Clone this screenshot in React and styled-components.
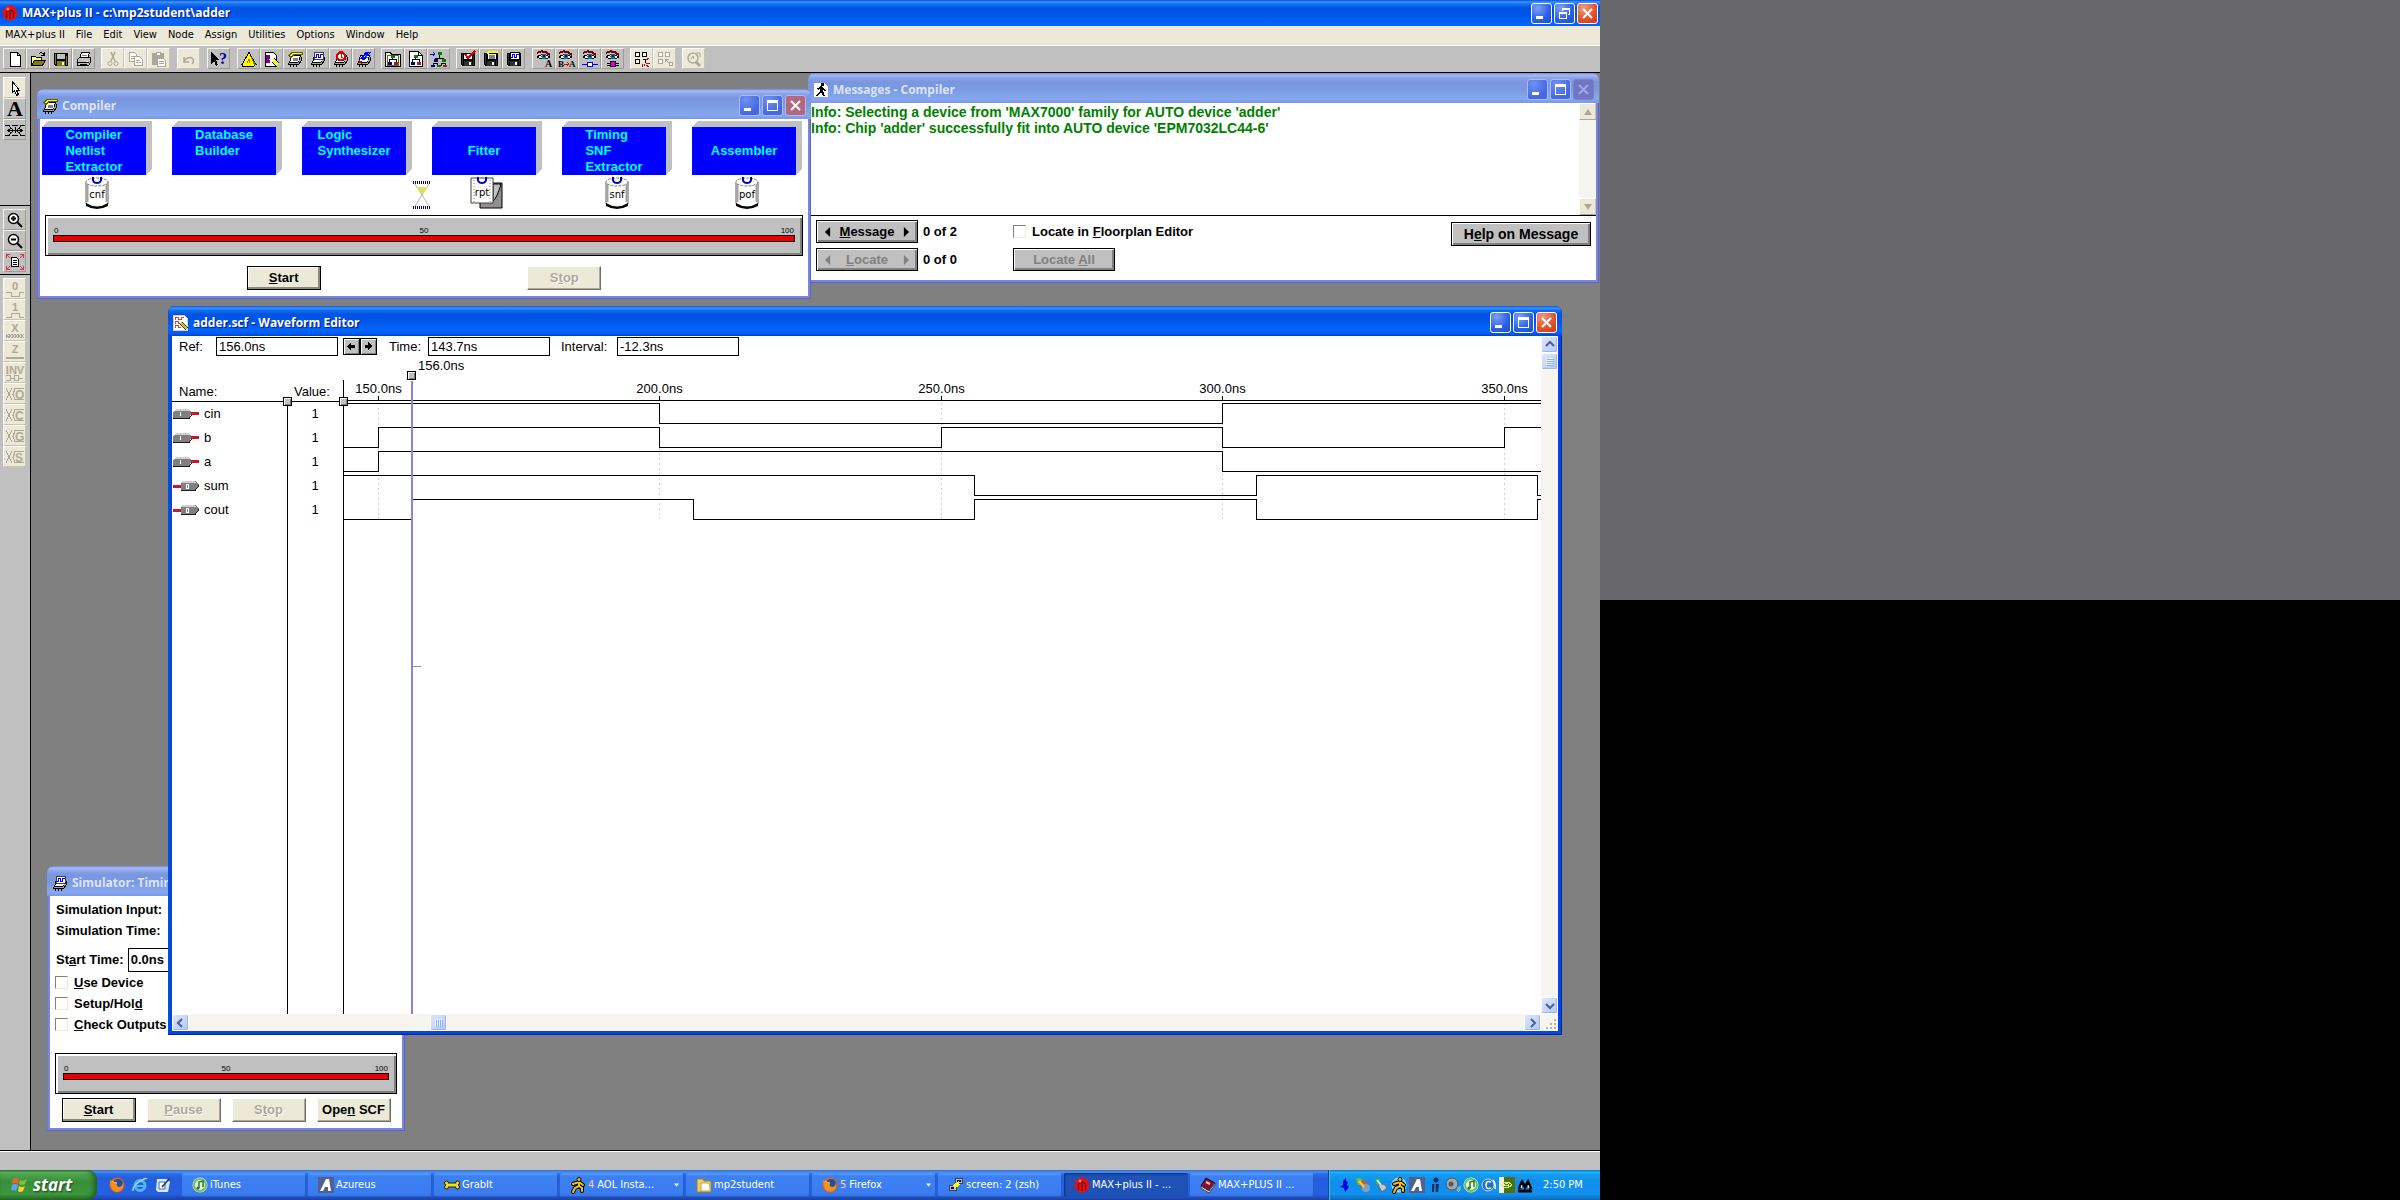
import React, { useState } from 'react'
import styled, { createGlobalStyle, css } from 'styled-components'

const UI = "Tahoma, 'DejaVu Sans Condensed', 'Liberation Sans', sans-serif"
const SYSTEM = "'Liberation Sans', Arial, sans-serif"
const CAPTION = "'Trebuchet MS', 'Open Sans', 'Noto Sans', sans-serif"

/* ---------- small helpers ---------- */

// "&Start" -> underlined S
const Accel = ({ text }) => {
  const i = text.indexOf('&')
  if (i < 0) return <span>{text}</span>
  return (
    <span>
      {text.slice(0, i)}
      <u>{text[i + 1]}</u>
      {text.slice(i + 2)}
    </span>
  )
}

const Pic = ({ children, w = 16, h = 16, smooth }) => (
  <svg width={w} height={h} viewBox={`0 0 ${w} ${h}`} fill="none" stroke="none" aria-hidden="true" shapeRendering={smooth ? 'auto' : 'crispEdges'}>
    {children}
  </svg>
)

/* ---------- icons ---------- */

const GRAY = '#aca899'

const Floppy = ({ fill = '#303030', label = '#c0c0c0' }) => (
  <g>
    <path d="M1 2h14v13H2l-1-1z" fill="#000" />
    <path d="M2 3h1v10H2zM13 5h1v9h-1z" fill={fill} />
    <path d="M4 3h8v5H4z" fill={label} />
    <path d="M4 10h8v5H4z" fill={fill} />
    <path d="M9 11h2v3H9z" fill="#fff" />
  </g>
)

const ChipBody = () => (
  <g>
    <path d="M4.500 4.500h9l-2 7h-9z" fill="#fff" stroke="#000" />
    <path d="M2 12h9l3-6v4l-2 4H1z" fill="#a0a0a0" />
    <path d="M1.500 11.500v2h10l3-4v-4" stroke="#000" />
    <path d="M3.500 14v2M6.500 14v2M9.500 14v2" stroke="#000" />
  </g>
)

const Eye = () => (
  <g>
    <path d="M1 3q6-4 13 2" stroke="#800000" strokeWidth="2" />
    <path d="M1 7q6-5 13 0q-7 4-13 0" fill="#fff" stroke="#000" />
    <circle cx="8" cy="6.500" r="2.500" fill="#008080" />
    <path d="M7 5h2v2H7z" fill="#000080" />
  </g>
)

const Tree = ({ y = 0 }) => (
  <g transform={`translate(0 ${y})`}>
    <path d="M7.500 6v2M4.500 10V7.500h7V10" stroke="#000" />
    <path d="M6 3h4v3H6z" fill="#008000" />
    <path d="M3 10h4v3H3z" fill="#000080" />
    <path d="M9 10h4v3H9z" fill="#a02020" />
  </g>
)

const GlyphText = ({ x, y, size, fill = '#000', children, family = 'Liberation Serif' }) => (
  <text x={x} y={y} fontSize={size} fontWeight="700" fontFamily={`'${family}', serif`} fill={fill}>{children}</text>
)

const icons = {
  new: <Pic><path d="M3.500 1.500h7l3 3v11h-10z" fill="#fff" stroke="#000" /><path d="M10.500 1.500v3h3" stroke="#000" /></Pic>,
  open: (
    <Pic>
      <path d="M1.500 14.500v-9h4l1 1h5v3" fill="#ffff80" stroke="#000" />
      <path d="M1.500 14.500l3-5h11l-3 5z" fill="#808000" stroke="#000" />
      <path d="M9 3q3-3 5 1M14 1v3h-3" stroke="#000" />
    </Pic>
  ),
  save: <Pic><Floppy fill="#808000" /></Pic>,
  print: (
    <Pic>
      <path d="M5.500 1.500h8l-2 6h-8z" fill="#fff" stroke="#000" />
      <path d="M6 4h5M6 6h4" stroke="#808080" />
      <path d="M1.500 8.500l2-2h11v5l-2 3h-11z" fill="#c0c0c0" stroke="#000" />
      <path d="M2 11h11M4 13h7" stroke="#000" />
      <path d="M10 10h2v1h-2z" fill="#ffff00" />
    </Pic>
  ),
  cut: <Pic smooth><path d="M6 1l4 9M10 1L6 10" stroke={GRAY} strokeWidth="1.500" /><circle cx="5" cy="12.500" r="2" stroke={GRAY} /><circle cx="11" cy="12.500" r="2" stroke={GRAY} /></Pic>,
  copy: <Pic><path d="M1.500 1.500h5l2 2v7h-7z" fill="#fff" stroke={GRAY} /><path d="M6.500 5.500h5l3 3v6h-8z" fill="#fff" stroke={GRAY} /><path d="M8 9.500h4M8 11.500h5M3 5.500h3M3 7.500h3" stroke={GRAY} /></Pic>,
  paste: <Pic><path d="M1.500 2.500h11v11h-11z" fill={GRAY} stroke={GRAY} /><path d="M5 1h4v3H5z" fill="#fff" stroke={GRAY} /><path d="M6.500 7.500h6l2 2v6h-8z" fill="#fff" stroke={GRAY} /><path d="M8 10.500h5M8 12.500h5" stroke={GRAY} /></Pic>,
  undo: <Pic smooth><path d="M3 6v5h5M3 10q4-5 8-3q3 3 0 6" stroke={GRAY} strokeWidth="1.500" /></Pic>,
  help: (
    <Pic w={18}>
      <path d="M1 1v12l3-3 2 5 2-1-2-5h4z" fill="#000" />
      <GlyphText x={9} y={13} size={16} fill="#0000a0">?</GlyphText>
    </Pic>
  ),
  tri: <Pic><path d="M8 1.500l7 12-3 2H2l-1-2z" fill="#ffff00" stroke="#000" /><path d="M8 2l5 12h2z" fill="#808000" /><path d="M6 12l2-4 1 4" stroke="#c06000" /></Pic>,
  design: (
    <Pic>
      <path d="M1.500 1.500h8l3 3v11h-11z" fill="#fff" stroke="#000" />
      <path d="M2 4h4v8H2z" fill="#800080" />
      <path d="M9 9l5 5" stroke="#000" strokeWidth="5" />
      <path d="M9 9l5 5" stroke="#ffff00" strokeWidth="3" />
      <path d="M6 8l3 3" stroke="#fff" strokeWidth="2" />
    </Pic>
  ),
  compiler: (
    <Pic>
      <ChipBody />
      <path d="M2 4.500l3-3h10v2H7l-3 3z" fill="#ffff00" stroke="#606000" />
      <path d="M6 7h5v3H6z" fill="#808080" />
    </Pic>
  ),
  sim: <Pic><ChipBody /><path d="M4.500 1.500h9v7h-9z" fill="#fff" stroke="#404040" /><path d="M5 6.500h1.500v-3h2v3h2v-3H13" stroke="#0000ff" /></Pic>,
  timing: <Pic><ChipBody /><circle cx="8" cy="5.500" r="4" fill="#fff" stroke="#e00000" strokeWidth="2" /><path d="M8 3v3h2M6 0h4" stroke="#e00000" /></Pic>,
  prog: <Pic><ChipBody /><path d="M14 1L7 9M11 1L5 8" stroke="#0000ff" strokeWidth="2" /><path d="M9 4l3 3M12 2l3 3" stroke="#00c0ff" /><path d="M3 10l3 2" stroke="#c00000" strokeWidth="2" /></Pic>,
  hier1: <Pic><path d="M.500 15.500v-14h5l1 2h9v12z" fill="#ffff99" stroke="#000" /><path d="M2.500 4.500h11v10h-11z" fill="#fff" stroke="#606060" /><Tree y={1} /></Pic>,
  hier2: <Pic><path d="M1.500.500h9l4 4v11h-13z" fill="#fff" stroke="#000" /><path d="M10.500.500v4h4" stroke="#000" /><Tree y={1} /></Pic>,
  hier3: (
    <Pic w={18}>
      <path d="M0 3h5M3 1l2 2-2 2" stroke="#0000ff" />
      <path d="M9.500 4v3M5.500 10V7.500h8V10M3.500 15v-2.500h4V15M11.500 15v-2.500h4V15" stroke="#000" />
      <path d="M8 1h4v3H8z" fill="#008000" />
      <path d="M4 8h4v3H4zM1 14h4v2H1z" fill="#000080" />
      <path d="M12 8h4v3h-4zM7 14h4v2H7z" fill="#008000" />
      <path d="M13 14h4v2h-4z" fill="#a02020" />
    </Pic>
  ),
  saveCheck: <Pic><Floppy label="#fff" /><path d="M5 3l3 4 7-7" stroke="#e00000" strokeWidth="2" /></Pic>,
  saveComp: <Pic><Floppy /><path d="M4.500 2.500h9v6h-9z" fill="#fff" stroke="#000" /><path d="M4 2l3-1h8" stroke="#ffff00" strokeWidth="2" /><path d="M6 4h6v4H6z" fill="#808080" /></Pic>,
  saveSim: <Pic><Floppy /><path d="M4.500 1.500h9v7h-9z" fill="#fff" stroke="#000" /><path d="M5 6.500h1.500v-3h2v3h2v-3H13" stroke="#0000ff" /></Pic>,
  eyeA: <Pic h={18}><Eye /><GlyphText x={9} y={17} size={10}>A</GlyphText></Pic>,
  eyeBA: <Pic w={18} h={18}><Eye /><GlyphText x={0} y={17} size={9}>B</GlyphText><path d="M6 14h5M9 12l2 2-2 2" stroke="#e00000" /><GlyphText x={11} y={17} size={9}>A</GlyphText></Pic>,
  eyeNode: <Pic h={18}><Eye /><path d="M0 14.500h16" stroke="#0000ff" /><path d="M5.500 12.500h5v4h-5z" fill="#fff" stroke="#0000ff" /></Pic>,
  eyeChip: <Pic h={18}><Eye /><path d="M2 13.500h12M2 15.500h12" stroke="#000" /><path d="M5.500 11.500h5v5h-5z" fill="#e000e0" stroke="#000" /></Pic>,
  grid1: (
    <Pic>
      <path d="M1.500 1.500h4v4h-4zM8.500 1.500h4v4h-4zM1.500 8.500h4v4h-4zM8.500 8.500h3v3" fill="#fff" stroke="#000" />
      <path d="M12 9l3-2M12 12h4M12 14l3 2M8 13v3M10 13v2" stroke="#e00000" />
    </Pic>
  ),
  grid2: <Pic><path d="M1.500 1.500h4v4h-4zM8.500 1.500h4v4h-4zM1.500 8.500h4v4h-4zM12.500 11.500h3v3h-3z" fill="#fff" stroke={GRAY} /><path d="M8 8l4 4M8.500 11V8.500h3" stroke={GRAY} /></Pic>,
  find: <Pic smooth><circle cx="7" cy="7" r="5" stroke={GRAY} strokeWidth="1.500" /><path d="M10 11l4 4" stroke={GRAY} strokeWidth="3" /><path d="M10 2h4v4M5 8l2-3 1 3" stroke={GRAY} /></Pic>,
  pointer: <Pic><path d="M5.500 1.500v11l2-2 2 5 2-1-2-4h3z" fill="#fff" stroke="#000" /></Pic>,
  textTool: <Pic w={18} h={18}><GlyphText x={1} y={16} size={22}>A</GlyphText></Pic>,
  nodeTool: (
    <Pic w={20}>
      <path d="M0 3.500h4l4 5-4 5H0M20 3.500h-4l-4 5 4 5h4M7 3.500h6M7 13.500h6" stroke="#000" />
      <path d="M3 8.500h14M6 6L3 8.500l3 2.500M14 6l3 2.500-3 2.500M10 5v6" stroke="#000" />
    </Pic>
  ),
  zoomIn: <Pic smooth><circle cx="6.500" cy="6.500" r="5" fill="#fff" stroke="#000" strokeWidth="1.500" /><path d="M4 6.500h5M6.500 4v5" stroke="#000" strokeWidth="2" /><path d="M10 10l5 5" stroke="#000" strokeWidth="2" /></Pic>,
  zoomOut: <Pic smooth><circle cx="6.500" cy="6.500" r="5" fill="#fff" stroke="#000" strokeWidth="1.500" /><path d="M4 6.500h5" stroke="#000" strokeWidth="2" /><path d="M10 10l5 5" stroke="#000" strokeWidth="2" /></Pic>,
  fit: (
    <Pic w={18}>
      <path d="M5.500 3.500h5l2 2v7h-7z" fill="#fff" stroke="#000" />
      <path d="M7 6.500h4M7 8.500h4M7 10.500h4" stroke="#000" />
      <path d="M.500 4V.500H4M1 1l3 3M14 .500h3.500V4M17 1l-3 3M.500 12v3.500H4M1 15l3-3M14 15.500h3.500V12M17 15l-3-3" stroke="#e03050" />
    </Pic>
  ),
}

// labels and strokes on the greyed waveform buttons
const waveTools = [
  { name: 'Low', text: '0', path: 'M1 12.500h5v4h8v-4h5' },
  { name: 'High', text: '1', path: 'M1 16.500h5v-4h8v4h5' },
  { name: 'Undefined', text: 'X', path: 'M1 12l3 4 3-4 3 4 3-4 3 4 3-4M1 16l3-4 3 4 3-4 3 4 3-4 3 4' },
  { name: 'High impedance', text: 'Z', path: 'M1 14.500h18M1 15.500h18' },
  { name: 'Invert', text: 'INV', path: 'M1 11.500h4v3h4v-3h4v3h5M1 16.500h4v-2h4v2h4v-2h5' },
  { name: 'Clock', text: 'O', side: true },
  { name: 'Count', text: 'C', side: true },
  { name: 'Group', text: 'G', side: true },
  { name: 'State', text: 'S', side: true },
]

const WaveGlyph = ({ text, path, side }) => (
  <Pic w={20} h={18}>
    {side ? (
      <g stroke={GRAY}>
        <path d="M1 3l6 12M7 3L1 15M19 3.500h-9l-2 6 2 5h9" />
        <text x="10" y="14" fontSize="12" fontWeight="700" fontFamily="'Liberation Sans', sans-serif" fill={GRAY} stroke="none">{text}</text>
      </g>
    ) : (
      <g>
        <text x="10" y="10" fontSize="11" fontWeight="700" textAnchor="middle" fontFamily="'Liberation Sans', sans-serif" fill={GRAY}>{text}</text>
        <path d={path} stroke={GRAY} />
      </g>
    )}
  </Pic>
)

const Ball = () => (
  <Pic smooth>
    <circle cx="8" cy="8" r="7.500" fill="#e81010" />
    <path d="M4.500 13V7q3.500-4 7 0v6M8 5v9" stroke="#801010" strokeWidth="1.500" />
    <circle cx="6" cy="4" r="1.500" fill="#ff8080" />
  </Pic>
)

const WaveDoc = () => (
  <Pic>
    <path d="M.500.500h11l3 3v12H.500z" fill="#fff" stroke="#d0d0d0" />
    <path d="M2 4.500v-2h3v2h3v-2h3M2 8.500v-2h3v2h3v-2M2 12.500v-2h3v2h3" stroke="#e04030" />
    <path d="M8 8l6 6" stroke="#404000" strokeWidth="4" />
    <path d="M8 8l6 6" stroke="#d0c030" strokeWidth="2" />
  </Pic>
)

const RunDoc = () => (
  <Pic>
    <path d="M1 1h10l4 3v11H1z" fill="#fff" />
    <path d="M8 1h3v3H8zM7 4l3 1v4H7zM4 6l4-1v1L5 8zM10 6l3 2-1 1-2-1zM7 9h3l2 5h-2l-2-4-3 4H3z" fill="#000" />
  </Pic>
)

const ConnectorIn = () => (
  <Pic w={26} h={12}>
    <path d="M3 1h12l4 4-3 5H0V4z" fill="#808080" />
    <path d="M3 1h12l2 2H1z" fill="#d0d0d0" />
    <path d="M0 10.500h16l3-4" stroke="#202020" />
    <path d="M7.500 4v4" stroke="#fff" />
    <path d="M18 4h8v3h-8z" fill="#c81828" />
  </Pic>
)

const ConnectorOut = () => (
  <Pic w={26} h={12}>
    <path d="M0 5h8v3H0z" fill="#c81828" />
    <path d="M9 1h13l4 4-4 6H8V4z" fill="#808080" />
    <path d="M9 1h13l1 2H8z" fill="#d0d0d0" />
    <path d="M8 10.500h14l4-5" stroke="#202020" />
    <path d="M13.500 4.500h2v4h-2z" stroke="#fff" />
  </Pic>
)

const Hook = () => <path d="M8 1q-1 6 4 6t4-6" stroke="#0000c0" strokeWidth="2" />

const Cylinder = ({ label }) => (
  <svg width="24" height="34" viewBox="0 0 24 34" fill="none">
    <path d="M1 6v22q11 7 22 0V6" fill="#fff" stroke="#606060" />
    <path d="M1 27q11 7 22 0v3q-11 6-22 0z" fill="#000" />
    <path d="M21.500 8v18M2.500 8v18" stroke="#a0a0a0" strokeWidth="2" />
    <ellipse cx="12" cy="6" rx="11" ry="4" fill="#fff" stroke="#808080" strokeDasharray="3 1" />
    <Hook />
    <text x="12" y="22" fontSize="10" textAnchor="middle" fontFamily="'DejaVu Sans', sans-serif" fill="#000">{label}</text>
  </svg>
)

const Report = () => (
  <svg width="34" height="34" viewBox="0 0 34 34" fill="none">
    <path d="M10 7h22v25H10z" fill="#909090" stroke="#000" />
    <path d="M31 8q-4 14-8 17v-17z" fill="#c0c0c0" stroke="#000" />
    <path d="M1 2h22v25H1z" fill="#fff" stroke="#404040" />
    <path d="M4 4v22M20 4v22" stroke="#808080" strokeDasharray="1 2" />
    <Hook />
    <text x="12" y="20" fontSize="10" textAnchor="middle" fontFamily="'DejaVu Sans', sans-serif" fill="#000">rpt</text>
  </svg>
)

const Hourglass = () => (
  <svg width="20" height="28" viewBox="0 0 20 28" fill="none">
    <path d="M1 1.500h18M1 26.500h18" stroke="#000080" strokeWidth="3" strokeDasharray="1 1" />
    <path d="M3 3l7 11 7-11M3 25l7-11 7 11" stroke="#b0b0b0" />
    <path d="M4 6h12l-6 8z" fill="#e0e060" />
  </svg>
)

const Flag = () => (
  <Pic w={20} h={20} smooth>
    <path d="M3 4q3-2 6 0l-1 5q-3-2-6 0z" fill="#f06030" />
    <path d="M10 5q3 2 7-1l-2 5q-3 2-6 0z" fill="#80c040" />
    <path d="M2 10q3-2 6 0l-2 6q-3-2-5 0z" fill="#60a0ff" />
    <path d="M9 11q3 2 6 0l-2 5q-3 2-5 0z" fill="#ffd030" />
  </Pic>
)

const Firefox = () => (
  <Pic smooth>
    <circle cx="8" cy="8" r="7.500" fill="#e06010" />
    <circle cx="9" cy="7" r="5" fill="#2050a0" />
    <path d="M1 3q3 3 7 3-1 3 2 4 3 0 4-4 1 8-6 9-7-1-7-12z" fill="#f09020" />
    <path d="M3 4q3 2 5 2" stroke="#ffd060" />
  </Pic>
)

const Explorer = () => (
  <Pic smooth>
    <circle cx="8" cy="8.500" r="5" stroke="#50b4f8" strokeWidth="3" />
    <path d="M4 9h9" stroke="#50b4f8" strokeWidth="2" />
    <path d="M1 14q-1-4 6-9t8-3" stroke="#a0d8ff" strokeWidth="1.500" />
  </Pic>
)

const ShowDesktop = () => (
  <Pic smooth>
    <path d="M2 2h10l3 3-2 10H3L1 13z" fill="#d8e8ff" />
    <path d="M4 5h6v7H4z" fill="#fff" stroke="#3070c0" />
    <path d="M7 10l7-8" stroke="#203060" strokeWidth="1.500" />
  </Pic>
)

const Itunes = () => (
  <Pic smooth>
    <circle cx="8" cy="8" r="7.500" fill="#e8f0e8" />
    <circle cx="8" cy="8" r="6" stroke="#70bc60" strokeWidth="2" />
    <path d="M7 11V5l4-1v6" stroke="#208020" strokeWidth="1.500" />
    <circle cx="6" cy="11" r="1.500" fill="#208020" />
  </Pic>
)

const Azureus = () => (
  <Pic smooth>
    <path d="M0 0h16v16H0z" fill="#506090" />
    <path d="M2 14L8 2h3l2 12h-3V10H7l-2 4z" fill="#fff" />
  </Pic>
)

const Bone = () => (
  <Pic w={16} smooth>
    <path d="M3 8h10" stroke="#202000" strokeWidth="5" />
    <circle cx="2.500" cy="6" r="2" fill="#f0e020" stroke="#202000" />
    <circle cx="2.500" cy="10" r="2" fill="#f0e020" stroke="#202000" />
    <circle cx="13.500" cy="6" r="2" fill="#f0e020" stroke="#202000" />
    <circle cx="13.500" cy="10" r="2" fill="#f0e020" stroke="#202000" />
    <path d="M2 8h12" stroke="#f0e020" strokeWidth="3" />
  </Pic>
)

const Runner = ({ ring }) => (
  <Pic smooth>
    {ring && <circle cx="8" cy="8" r="7" fill="#70b8f0" stroke="#d0e8ff" />}
    <path d="M9 4v5l3 2v3M9 9l-4 2-2 4M3 7l6-2 4 3" stroke="#000" strokeWidth="4" strokeLinecap="round" />
    <path d="M9 4v5l3 2v3M9 9l-4 2-2 4M3 7l6-2 4 3" stroke="#f0c020" strokeWidth="2" strokeLinecap="round" />
    <circle cx="9" cy="2.500" r="2" fill="#f0c020" stroke="#000" />
  </Pic>
)

const Folder = () => (
  <Pic smooth>
    <path d="M1 2h6l1 2h7v11H1z" fill="#f0d060" stroke="#a08020" />
    <path d="M5 6h7l2 2v6H5z" fill="#fff" stroke="#c0a040" />
  </Pic>
)

const Putty = () => (
  <Pic>
    <path d="M7.500 1.500h7v5h-7z" fill="#c0c0c0" stroke="#404040" />
    <path d="M1.500 8.500h7v5h-7z" fill="#c0c0c0" stroke="#404040" />
    <path d="M9 3h4v2H9zM3 10h4v2H3z" fill="#000080" />
    <path d="M11 5l-4 3h3l-4 3" stroke="#ffff00" strokeWidth="2" />
  </Pic>
)

const Book = () => (
  <Pic smooth>
    <path d="M6 1l9 5-6 8-8-5z" fill="#801040" stroke="#300010" />
    <path d="M1 9v2l8 5 6-8V6l-6 8z" fill="#fff" stroke="#404040" />
    <path d="M6 5l4 2" stroke="#ffd0a0" strokeWidth="2" />
  </Pic>
)

const trayIcons = [
  ['Audio jack', <Pic smooth><path d="M9 1v3l2 1-1 3 2 2-4 5-1-4-4-1 3-2V4z" fill="#0000e0" /></Pic>],
  ['Users', <Pic smooth><path d="M1 2q3-2 6 0v6H3z" fill="#70c030" /><path d="M6 4q5-1 7 3l-3 4H6z" fill="#e05030" /><circle cx="11" cy="11" r="4" fill="#80a0c0" /><path d="M4 4l5 6" stroke="#ffd030" strokeWidth="2" /></Pic>],
  ['Safely remove', <Pic smooth><path d="M2 2h5v6H4z" fill="#40b040" /><path d="M5 8l6-1 3 4-5 4z" fill="#c0c8d0" stroke="#606870" /><path d="M4 3l4 5" stroke="#c0ffc0" strokeWidth="2" /></Pic>],
  ['AIM', <Runner ring />],
  ['Azureus', <Azureus />],
  ['Messenger', <Pic smooth><circle cx="9" cy="3" r="2.500" fill="#103060" /><path d="M5 7h7l-1 8H9l-1-5-1 5H5z" fill="#103060" /><path d="M8 7v6" stroke="#60a0e0" /></Pic>],
  ['Volume', <Pic smooth><circle cx="7" cy="7" r="6" fill="#a0a8b0" stroke="#505860" /><circle cx="6" cy="7" r="2.500" fill="#505860" /><path d="M13 10q1 2-1 4M15 9q1 4-2 6" stroke="#c0d0e0" /></Pic>],
  ['iTunes', <Itunes />],
  ['Network', <Pic smooth><circle cx="7" cy="8" r="6" fill="#2070c0" stroke="#c0d8f0" /><path d="M10 5q-5-2-5 3t5 3M12 3q3 4 2 9" stroke="#fff" strokeWidth="1.500" /></Pic>],
  ['Display', <Pic><path d="M0 0h16v16H0z" fill="#507010" /><path d="M0 0h5v16H0z" fill="#f0f0e0" /><path d="M2 8q5-6 11 0q-6 5-11 0M5 8q3-3 5 0q-2 2-5 0" stroke="#d0f080" /></Pic>],
  ['Monitor', <Pic smooth><path d="M1 14h14M2 12l3-7 3 5 3-5 3 7" stroke="#000" strokeWidth="3" /><path d="M4 11l1-3M11 8l1 3" stroke="#fff" /></Pic>],
]

/* ---------- page ---------- */

const GlobalStyle = createGlobalStyle`
  *{
    box-sizing:border-box;
  }
  body{
    margin:0;
    background:#000;
    font:13px/16px ${SYSTEM};
    color:#000;
  }
  button, input{
    font:inherit;
    color:inherit;
    margin:0;
    padding:0;
    border:0;
    border-radius:0;
  }
  svg{
    display:block;
    flex:none;
    overflow:visible;
  }
`

const Screens = styled.div`
  display:grid;
  grid-template-columns:2fr 1fr;
  height:100vh;
`

const Primary = styled.div`
  display:flex;
  flex-direction:column;
  min-width:0;
  background:#c0c0c0;
`

const Secondary = styled.div`
  display:grid;
  grid-template-rows:1fr 1fr;
`

const SecondaryHalf = styled.div`
  background:${p => p.$dark ? '#000' : '#68676c'};
`

/* ---------- caption bars and windows ---------- */

const activeCaption = 'linear-gradient(#0a4fd8 0, #3c95ff 2px, #1573f5 4px, #0054e3 8px, #0055e6 14px, #0065ff 24px, #005dfa 27px, #0043c8 30px)'
const inactiveCaption = 'linear-gradient(#7088dc 0, #a4baf4 2px, #8aa3ea 5px, #7a96df 9px, #7b99e2 16px, #86a8ee 26px, #7e97e6 30px)'

const CaptionBar = styled.header`
  display:flex;
  align-items:center;
  flex:none;
  gap:4px;
  height:${p => p.$main ? '26px' : '30px'};
  padding:${p => p.$main ? '0 2px' : '3px 2px 0'};
  background:${p => p.$active ? activeCaption : inactiveCaption};
`

const CaptionText = styled.h1`
  flex:1;
  min-width:0;
  margin:0;
  overflow:hidden;
  white-space:nowrap;
  font:700 12px/18px ${CAPTION};
  color:${p => p.$active ? '#fff' : '#dbe4f9'};
  text-shadow:${p => p.$active ? '1px 1px 1px #0a1883' : 'none'};
`

const CaptionButtons = styled.div`
  display:flex;
  gap:2px;
`

const captionTone = {
  blue: 'radial-gradient(circle at 30% 20%, #7ba0f5, #2a5fe6 60%, #1c4fd0)',
  soft: 'radial-gradient(circle at 30% 20%, #6f8ff0, #4468e4 70%)',
  red: 'radial-gradient(circle at 30% 20%, #f09a80, #e0502c 60%, #c83a10)',
  rose: '#b4687e',
  off: '#7075c6',
}

const CaptionButton = styled.button`
  display:grid;
  place-items:center;
  width:21px;
  height:21px;
  border:1px solid ${p => p.$tone === 'off' ? '#7b80cf' : p.$tone === 'blue' || p.$tone === 'red' ? '#fff' : '#a9bdf5'};
  border-radius:3px;
  background:${p => captionTone[p.$tone]};
`

const CaptionGlyph = ({ kind, dim }) => (
  <Pic w={13} h={13} smooth={kind === 'close'}>
    {kind === 'min' && <path d="M1 9h7v3H1z" fill="#fff" />}
    {kind === 'max' && <path d="M1 1h11v11H1zM2 4h9v7H2z" fill="#fff" fillRule="evenodd" />}
    {kind === 'restore' && <path d="M4 1h8v7h-2V7h1V3H5v1H4zM1 5h8v7H1zM2 7h6v4H2z" fill="#fff" fillRule="evenodd" />}
    {kind === 'close' && <path d="M2 2l9 9M11 2l-9 9" stroke={dim ? '#a6a8e0' : '#fff'} strokeWidth="2" />}
  </Pic>
)

const Caption = ({ title, icon, active, main, closable = true }) => (
  <CaptionBar $active={active} $main={main}>
    {icon}
    <CaptionText $active={active}>{title}</CaptionText>
    <CaptionButtons>
      <CaptionButton $tone={active ? 'blue' : 'soft'} aria-label="Minimize"><CaptionGlyph kind="min" /></CaptionButton>
      <CaptionButton $tone={active ? 'blue' : 'soft'} aria-label="Maximize"><CaptionGlyph kind={main ? 'restore' : 'max'} /></CaptionButton>
      <CaptionButton $tone={!closable ? 'off' : active ? 'red' : 'rose'} disabled={!closable} aria-label="Close">
        <CaptionGlyph kind="close" dim={!closable} />
      </CaptionButton>
    </CaptionButtons>
  </CaptionBar>
)

const WindowFrame = styled.section`
  --edge:${p => p.$active ? '4px' : '3px'};
  position:absolute;
  left:${p => p.$x}px;
  top:${p => p.$y}px;
  width:${p => p.$w}px;
  height:${p => p.$h}px;
  display:flex;
  flex-direction:column;
  padding:0 var(--edge) var(--edge);
  overflow:hidden;
  border-radius:7px 7px 0 0;
  background:${p => p.$active ? '#0048e0' : '#7985df'};
  box-shadow:inset -1px -1px 0 ${p => p.$active ? '#001ea0' : '#5c64c4'}, inset 1px 0 0 ${p => p.$active ? '#0a50d0' : '#6c78d4'};

  > header{
    margin:0 calc(-1 * var(--edge));
    padding-left:5px;
    padding-right:5px;
  }
`

const WindowBody = styled.div`
  flex:1;
  min-height:0;
  display:flex;
  flex-direction:column;
  background:#fff;
`

const MdiWindow = ({ x, y, w, h, children, ...caption }) => (
  <WindowFrame $x={x} $y={y} $w={w} $h={h} $active={caption.active}>
    <Caption {...caption} />
    <WindowBody>{children}</WindowBody>
  </WindowFrame>
)

/* ---------- menu and tool bars ---------- */

const MenuBar = styled.nav`
  display:flex;
  gap:11px;
  height:20px;
  padding:0 5px 2px;
  background:#ece9d8;
  border-bottom:1px solid #fff;

  button{
    background:none;
    font:11px/16px ${UI};
  }
`

const ToolBar = styled.div`
  display:flex;
  height:27px;
  padding:2px 3px;
  border-bottom:1px solid #000;
`

const ToolGroup = styled.div`
  display:flex;
  margin-right:${p => p.$wide ? '7px' : '6px'};
`

const ToolButton = styled.button`
  display:grid;
  place-items:center;
  width:23px;
  height:21px;
  border:1px solid;
  border-color:#f6f4ea #a09c90 #a09c90 #f6f4ea;
  background:#c0c0c0;

  ${p => (p.disabled || p.$pressed) && css`
    background:#ece9d8;
    border-color:#fff #c8c4b4 #c8c4b4 #fff;
  `}
`

const toolGroups = [
  { items: ['new', 'open', 'save', 'print'] },
  { items: ['cut', 'copy', 'paste'], off: ['cut', 'copy', 'paste'], wide: true },
  { items: ['undo'], off: ['undo'], wide: true },
  { items: ['help'], wide: true },
  { items: ['tri', 'design', 'compiler', 'sim', 'timing', 'prog'] },
  { items: ['hier1', 'hier2', 'hier3'] },
  { items: ['saveCheck', 'saveComp', 'saveSim'], wide: true },
  { items: ['eyeA', 'eyeBA', 'eyeNode', 'eyeChip'] },
  { items: ['grid1', 'grid2'], off: ['grid2'], pressed: 'grid1' },
  { items: ['find'], off: ['find'] },
]

const Workspace = styled.div`
  flex:1;
  min-height:0;
  display:grid;
  grid-template-columns:31px minmax(0, 1fr);
  border-bottom:1px solid #000;
`

const Palette = styled.aside`
  border-right:1px solid #000;
`

const PaletteSection = styled.div`
  padding:${p => p.$first ? '4px 3px 65px' : '3px 3px 2px'};
  border-bottom:${p => p.$last ? '0' : '1px solid #000'};
`

const Mdi = styled.main`
  position:relative;
  overflow:hidden;
  background:#808080;
`

const StatusBar = styled.footer`
  height:19px;
  border-top:1px solid #fff;
`

/* ---------- shared controls ---------- */

const PushButton = styled.button`
  width:74px;
  height:24px;
  background:#ece9d8;
  font-weight:700;
  border:1px solid;
  border-color:#fff #716f64 #716f64 #fff;
  box-shadow:inset -1px -1px 0 #aca899;
  white-space:nowrap;

  ${p => p.$default && css`
    border-color:#000;
    box-shadow:inset -2px -2px 0 #8c897c, inset 1px 1px 0 #fff;
  `}

  &:disabled{
    color:${GRAY};
    text-shadow:1px 1px 0 #fff;
  }
`

const GrayButton = styled.button`
  display:flex;
  align-items:center;
  justify-content:${p => p.$arrows ? 'space-between' : 'center'};
  width:${p => p.$long ? '140px' : '102px'};
  height:${p => p.$long ? '24px' : '23px'};
  padding:0 7px;
  border:1px solid #000;
  background:#c0c0c0;
  box-shadow:inset 1px 1px 0 #fff, inset -2px -2px 0 #808080;
  font-weight:700;
  font-size:${p => p.$long ? '14px' : '13px'};
  white-space:nowrap;

  &:disabled{
    color:#808080;
  }
`

const CheckLabel = styled.label`
  display:flex;
  align-items:center;
  gap:6px;
  font-weight:700;
`

const CheckBox = styled.input`
  appearance:none;
  width:13px;
  height:13px;
  border:1px solid;
  border-color:#808080 #ece9d8 #ece9d8 #808080;
  background:#fff;
`

const Field = styled.input`
  width:122px;
  height:${p => p.$tall ? '24px' : '19px'};
  padding:0 2px;
  border:1px solid #000;
  background:#fff;
  font-weight:${p => p.$tall ? 700 : 400};
`

const GaugeFrame = styled.div`
  margin:0 5px;
  height:41px;
  padding:10px 7px 0;
  border:1px solid #000;
  background:#c0c0c0;
  box-shadow:inset 2px 2px 0 #fff, inset -2px -2px 0 #808080;
`

const GaugeScale = styled.div`
  display:grid;
  grid-template-columns:1fr auto 1fr;
  padding:0 1px;
  font-size:8px;
  line-height:9px;

  span:last-child{
    text-align:right;
  }
`

const GaugeTrack = styled.div`
  height:7px;
  border:1px solid #000;
`

const GaugeFill = styled.div`
  height:5px;
  background:#e80000;
`

const Gauge = ({ value }) => (
  <GaugeFrame role="progressbar" aria-valuenow={value} aria-label="Progress">
    <GaugeScale><span>0</span><span>50</span><span>100</span></GaugeScale>
    <GaugeTrack><GaugeFill style={{ width: `${value}%` }} /></GaugeTrack>
  </GaugeFrame>
)

/* ---------- scroll bars ---------- */

const ScrollTrack = styled.div`
  display:flex;
  flex-direction:${p => p.$vertical ? 'column' : 'row'};
  flex:none;
  justify-content:space-between;
  width:${p => p.$vertical ? '17px' : 'auto'};
  height:${p => p.$vertical ? 'auto' : '17px'};
  background:#f6f5f0;
`

const ScrollButton = styled.button`
  display:grid;
  place-items:center;
  flex:none;
  width:17px;
  height:17px;
  border:1px solid #fff;
  border-radius:2px;
  background:linear-gradient(135deg, #dbe5fe, #b4c8f8);
  box-shadow:inset -1px -1px 0 #a0b4ec;

  ${p => p.disabled && css`
    background:#ece9d8;
    border-color:#fff #c8c4b4 #aca899 #fff;
    border-radius:0;
    box-shadow:none;
  `}
`

const Spacer = styled.div`
  flex:${p => p.$grow};
`

const chevrons = {
  up: 'M1 6l4-4 4 4',
  down: 'M1 3l4 4 4-4',
  left: 'M6 1L2 5l4 4',
  right: 'M3 1l4 4-4 4',
}

const Chevron = ({ dir }) => <Pic w={10} h={10} smooth><path d={chevrons[dir]} stroke="#4d6185" strokeWidth="2" /></Pic>
const Solid = ({ dir, color = '#000', w = 8, h = 8 }) => (
  <svg width={w} height={h} viewBox="0 0 8 8" preserveAspectRatio="none">
    <path d={{ up: 'M4 1l4 6H0z', down: 'M4 7l4-6H0z', left: 'M7 0v8L1 4z', right: 'M1 0v8l6-4z' }[dir]} fill={color} />
  </svg>
)
const Grip = ({ vertical }) => (
  <Pic w={9} h={9}>
    <path d={vertical ? 'M1 1h7M1 3h7M1 5h7M1 7h7' : 'M1 1v7M3 1v7M5 1v7M7 1v7'} stroke="#eef4fe" />
    <path d={vertical ? 'M2 2h7M2 4h7M2 6h7M2 8h7' : 'M2 2v7M4 2v7M6 2v7M8 2v7'} stroke="#8cb0f8" />
  </Pic>
)

/* ---------- compiler window ---------- */

const StageRow = styled.div`
  display:grid;
  grid-template-columns:repeat(6, 110px);
  gap:20px;
  padding:2px 2px 0;
`

const Stage = styled.div`
  height:54px;
  padding:6px 6px 0 0;
  background:#c0c0c0;
  clip-path:polygon(6px 0, 100% 0, 100% calc(100% - 6px), calc(100% - 6px) 100%, 0 100%, 0 6px);
`

const StageFace = styled.div`
  display:flex;
  justify-content:center;
  height:48px;
  background:#0000ff;
  color:#00ffff;
  font-weight:700;
  white-space:pre;
`

const StageFiles = styled(StageRow)`
  height:40px;
  padding-top:1px;
  justify-items:center;
`

const HourglassSlot = styled.div`
  justify-self:end;
  margin:5px -20px 0 0;
`

const ButtonRow = styled.div`
  display:flex;
  justify-content:${p => p.$gap ? 'center' : 'space-evenly'};
  gap:${p => p.$gap ? '11px' : '0'};
  padding-top:${p => p.$gap ? '4px' : '10px'};
`

const stages = ['Compiler\nNetlist\nExtractor', 'Database\nBuilder', 'Logic\nSynthesizer', '\nFitter', 'Timing\nSNF\nExtractor', '\nAssembler']

const Compiler = () => (
  <MdiWindow x={6} y={16} w={774} h={210} title="Compiler" icon={icons.compiler}>
    <StageRow>
      {stages.map(s => <Stage key={s}><StageFace>{s}</StageFace></Stage>)}
    </StageRow>
    <StageFiles>
      <Cylinder label="cnf" />
      <span />
      <HourglassSlot><Hourglass /></HourglassSlot>
      <Report />
      <Cylinder label="snf" />
      <Cylinder label="pof" />
    </StageFiles>
    <Gauge value={100} />
    <ButtonRow>
      <PushButton $default><Accel text="&Start" /></PushButton>
      <PushButton disabled><Accel text="S&top" /></PushButton>
    </ButtonRow>
  </MdiWindow>
)

/* ---------- messages window ---------- */

const MessageArea = styled.div`
  display:flex;
  height:113px;
  border-bottom:1px solid #000;
`

const MessageList = styled.ul`
  flex:1;
  margin:0;
  padding:1px 0 0;
  list-style:none;
  color:#008000;
  font-size:14px;
  font-weight:700;
`

const MessagePanel = styled.div`
  display:grid;
  grid-template-columns:102px 85px minmax(0, 1fr) auto;
  gap:5px;
  align-items:center;
  padding:4px 5px 0;
  font-weight:700;
`

const HelpSlot = styled.div`
  grid-column:4;
  grid-row:1 / 3;
  align-self:start;
  padding-top:2px;
`

const Messages = () => (
  <MdiWindow x={777} y={0} w={791} h={210} title="Messages - Compiler" icon={<RunDoc />} closable={false}>
    <MessageArea>
      <MessageList>
        <li>Info: Selecting a device from 'MAX7000' family for AUTO device 'adder'</li>
        <li>Info: Chip 'adder' successfully fit into AUTO device 'EPM7032LC44-6'</li>
      </MessageList>
      <ScrollTrack $vertical>
        <ScrollButton disabled aria-label="Scroll up"><Solid dir="up" color={GRAY} /></ScrollButton>
        <ScrollButton disabled aria-label="Scroll down"><Solid dir="down" color={GRAY} /></ScrollButton>
      </ScrollTrack>
    </MessageArea>
    <MessagePanel>
      <GrayButton $arrows><Solid dir="left" w={7} h={10} /><Accel text="&Message" /><Solid dir="right" w={7} h={10} /></GrayButton>
      <span>0 of 2</span>
      <CheckLabel><CheckBox type="checkbox" /><Accel text="Locate in &Floorplan Editor" /></CheckLabel>
      <HelpSlot><GrayButton $long><Accel text="H&elp on Message" /></GrayButton></HelpSlot>
      <GrayButton $arrows disabled><Solid dir="left" w={7} h={10} color="#808080" /><Accel text="&Locate" /><Solid dir="right" w={7} h={10} color="#808080" /></GrayButton>
      <span>0 of 0</span>
      <GrayButton disabled><Accel text="Locate &All" /></GrayButton>
    </MessagePanel>
  </MdiWindow>
)

/* ---------- simulator window ---------- */

const SimForm = styled.div`
  display:flex;
  flex-direction:column;
  height:157px;
  padding:3px 5px 0;
  font-weight:700;
  white-space:nowrap;
`

const SimLine = styled.div`
  display:flex;
  align-items:center;
  gap:4px;
  flex:none;
  height:${p => p.$tall ? '25px' : '21px'};
  padding:0 1px;
  margin-top:${p => p.$tall ? '6px' : '0'};
`

const SimCheck = styled(CheckLabel)`
  height:21px;
`

const Simulator = () => (
  <MdiWindow x={16} y={793} w={358} h={265} title="Simulator: Timing Simulation" icon={icons.sim}>
    <SimForm>
      <SimLine>Simulation Input:</SimLine>
      <SimLine>Simulation Time:</SimLine>
      <SimLine $tall>
        <label htmlFor="start-time"><Accel text="St&art Time:" /></label>
        <Field id="start-time" $tall defaultValue="0.0ns" />
      </SimLine>
      {['&Use Device', 'Setup/Hol&d', '&Check Outputs'].map(t => (
        <SimCheck key={t}><CheckBox type="checkbox" /><Accel text={t} /></SimCheck>
      ))}
    </SimForm>
    <Gauge value={100} />
    <ButtonRow $gap>
      <PushButton $default><Accel text="&Start" /></PushButton>
      <PushButton disabled><Accel text="&Pause" /></PushButton>
      <PushButton disabled><Accel text="S&top" /></PushButton>
      <PushButton><Accel text="Ope&n SCF" /></PushButton>
    </ButtonRow>
  </MdiWindow>
)

/* ---------- waveform editor ---------- */

const EditorSplit = styled.div`
  flex:1;
  min-height:0;
  display:grid;
  grid-template-columns:minmax(0, 1fr) 17px;
  grid-template-rows:minmax(0, 1fr) 17px;
`

const EditorView = styled.div`
  display:flex;
  flex-direction:column;
  min-height:0;
`

const RefBar = styled.div`
  display:flex;
  align-items:center;
  height:21px;
  padding-left:7px;
`

const RefLabel = styled.label`
  width:${p => p.$w}px;
  white-space:nowrap;
`

const RefItem = styled.div`
  display:flex;
  align-items:center;
  margin-right:11px;
`

const StepButtons = styled.div`
  display:flex;
  margin:0 12px 0 -6px;
`

const StepButton = styled.button`
  display:grid;
  place-items:center;
  width:17px;
  height:17px;
  border:1px solid #000;
  background:#c0c0c0;
  box-shadow:inset 1px 1px 0 #fff, inset -1px -1px 0 #808080;
`

const StepArrow = ({ flip }) => (
  <Pic w={9} h={9}>
    <path d={flip ? 'M8 4L4 0v3H1v3h3v3z' : 'M0 4l4-4v3h4v3H4v3z'} fill="#000" />
  </Pic>
)

const Panes = styled.div`
  flex:1;
  min-height:0;
  display:grid;
  grid-template-columns:171px minmax(0, 1fr);
`

const SignalPane = styled.div`
  position:relative;

  /* divider between the Name and Value columns */
  &::after{
    content:'';
    position:absolute;
    top:43px;
    bottom:0;
    left:115px;
    border-left:1px solid #000;
  }
`

const SignalTable = styled.table`
  width:100%;
  border-collapse:collapse;
  table-layout:fixed;

  th{
    height:44px;
    padding:0 0 1px 7px;
    border-bottom:1px solid #000;
    vertical-align:bottom;
    text-align:left;
    font-weight:400;
  }
  th:first-child{
    width:115px;
  }
  td{
    height:24px;
    padding:1px 0 0;
  }
  td + td{
    text-align:center;
  }
`

const SignalName = styled.div`
  display:flex;
  align-items:center;
  gap:5px;
  padding-left:1px;
`

const DragHandle = styled.div`
  position:absolute;
  z-index:1;
  top:40px;
  left:${p => p.$x}px;
  width:9px;
  height:9px;
  border:1px solid #000;
  background:#c0c0c0;
  box-shadow:inset 1px 1px 0 #fff, inset -1px -1px 0 #808080;
`

const WavePlot = styled.svg`
  width:100%;
  height:100%;
  overflow:hidden;
  font:13px ${SYSTEM};
`

// times are in ns, levels alternate after each edge
const signals = [
  { name: 'cin', dir: 'in', value: 1, start: 1, edges: [200, 300] },
  { name: 'b', dir: 'in', value: 1, start: 0, edges: [150, 200, 250, 300, 350] },
  { name: 'a', dir: 'in', value: 1, start: 0, edges: [150, 300] },
  { name: 'sum', dir: 'out', value: 1, start: 1, edges: [256, 306, 356] },
  { name: 'cout', dir: 'out', value: 1, start: 0, edges: [156, 206, 256, 306, 356] },
]

const PX_PER_NS = 5.63
const timeX = t => Math.floor(35 + (t - 150) * PX_PER_NS) + 0.5

const wavePath = (signal, row) => {
  const y = level => 46.5 + row * 24 + (level ? 0 : 20)
  let level = signal.start
  let d = `M0 ${y(level)}`
  signal.edges.forEach(t => {
    level = 1 - level
    d += `H${timeX(t)}V${y(level)}`
  })
  return `${d}H4000`
}

const Plot = () => (
  <WavePlot shapeRendering="crispEdges" fill="none">
    <line x1="0.5" x2="0.5" y1="23" y2="4000" stroke="#000" />
    <line x1="0" x2="4000" y1="43.5" y2="43.5" stroke="#000" />
    {[150, 200, 250, 300, 350].map(t => (
      <g key={t}>
        <text x={timeX(t)} y="36" textAnchor="middle" fill="#000">{t}.0ns</text>
        <line x1={timeX(t)} x2={timeX(t)} y1="39" y2="44" stroke="#000" />
        <line x1={timeX(t)} x2={timeX(t)} y1="46" y2="162" stroke="#d0d0d0" strokeDasharray="2 3" />
      </g>
    ))}
    {signals.map((s, i) => <path key={s.name} d={wavePath(s, i)} stroke="#000" />)}
    <line x1="69" x2="69" y1="24" y2="4000" stroke="#8a84d8" strokeWidth="2" />
    <line x1="70" x2="78" y1="309.500" y2="309.500" stroke="#8a84d8" />
    <path d="M64.500 14.500h8v8h-8z" fill="#c0c0c0" stroke="#000" />
    <path d="M65.500 22v-6.500H72" stroke="#fff" />
    <path d="M66 21.500h5.500V16" stroke="#808080" />
    <text x="75" y="13" fill="#000">156.0ns</text>
  </WavePlot>
)

const Waveform = () => {
  const [ref, setRef] = useState('156.0ns')
  return (
    <MdiWindow x={137} y={233} w={1394} h={729} title="adder.scf - Waveform Editor" icon={<WaveDoc />} active>
      <EditorSplit>
        <EditorView>
          <RefBar>
            <RefItem>
              <RefLabel $w={37} htmlFor="ref">Ref:</RefLabel>
              <Field id="ref" value={ref} onChange={e => setRef(e.target.value)} />
            </RefItem>
            <StepButtons>
              <StepButton aria-label="Previous edge"><StepArrow /></StepButton>
              <StepButton aria-label="Next edge"><StepArrow flip /></StepButton>
            </StepButtons>
            <RefItem>
              <RefLabel $w={39} htmlFor="time">Time:</RefLabel>
              <Field id="time" defaultValue="143.7ns" />
            </RefItem>
            <RefItem>
              <RefLabel $w={56} htmlFor="interval">Interval:</RefLabel>
              <Field id="interval" defaultValue="-12.3ns" />
            </RefItem>
          </RefBar>
          <Panes>
            <SignalPane>
              <SignalTable>
                <thead><tr><th>Name:</th><th>Value:</th></tr></thead>
                <tbody>
                  {signals.map(s => (
                    <tr key={s.name}>
                      <td><SignalName>{s.dir === 'in' ? <ConnectorIn /> : <ConnectorOut />}{s.name}</SignalName></td>
                      <td>{s.value}</td>
                    </tr>
                  ))}
                </tbody>
              </SignalTable>
              <DragHandle $x={111} />
              <DragHandle $x={167} />
            </SignalPane>
            <Plot />
          </Panes>
        </EditorView>
        <ScrollTrack $vertical>
          <ScrollButton aria-label="Scroll up"><Chevron dir="up" /></ScrollButton>
          <ScrollButton aria-label="Vertical position"><Grip vertical /></ScrollButton>
          <Spacer $grow={1} />
          <ScrollButton aria-label="Scroll down"><Chevron dir="down" /></ScrollButton>
        </ScrollTrack>
        <ScrollTrack>
          <ScrollButton aria-label="Scroll left"><Chevron dir="left" /></ScrollButton>
          <Spacer $grow={241} />
          <ScrollButton aria-label="Horizontal position"><Grip /></ScrollButton>
          <Spacer $grow={1077} />
          <ScrollButton aria-label="Scroll right"><Chevron dir="right" /></ScrollButton>
        </ScrollTrack>
        <ScrollTrack>
          <Pic w={17} h={17}>
            <path d="M13 5h2v2h-2zM13 9h2v2h-2zM13 13h2v2h-2zM9 9h2v2H9zM9 13h2v2H9zM5 13h2v2H5z" fill="#b8b4a4" />
          </Pic>
        </ScrollTrack>
      </EditorSplit>
    </MdiWindow>
  )
}

/* ---------- task bar ---------- */

const TaskBar = styled.div`
  display:flex;
  align-items:stretch;
  flex:none;
  height:30px;
  background:linear-gradient(#3168d5 0, #4993e6 2px, #2b6be8 4px, #245edb 8px, #2560e0 24px, #1941a5 30px);
  font:11px/16px ${UI};
  color:#fff;
`

const StartButton = styled.button`
  display:flex;
  align-items:center;
  gap:3px;
  width:97px;
  padding-left:10px;
  border-radius:0 9px 9px 0;
  background:linear-gradient(#2f7a2f 0, #6cb86c 2px, #4aa34a 5px, #388e38 12px, #3c983c 24px, #266b26 30px);
  box-shadow:inset -3px 0 5px #1d5f1d;
  color:#fff;
  font:italic 700 17px/24px 'Trebuchet MS', 'Open Sans', sans-serif;
  text-shadow:1px 1px 2px #204020;
`

const QuickLaunch = styled.div`
  display:flex;
  align-items:center;
  gap:7px;
  width:85px;
  padding-left:12px;

  button{
    background:none;
  }
`

const TaskList = styled.div`
  display:flex;
  flex:1;
  gap:2px;
  min-width:0;
  padding:3px 0;
`

const TaskButton = styled.button`
  display:flex;
  align-items:center;
  gap:2px;
  flex:0 1 124px;
  min-width:0;
  padding:0 5px 0 10px;
  border-radius:2px;
  background:${p => p.$active ? '#1e52b7' : 'linear-gradient(#5f9bff 0, #3c81f3 3px, #3a7cf0 20px, #3472e4)'};
  box-shadow:${p => p.$active ? 'inset 1px 1px 2px #10307a' : 'inset -1px -1px 0 #2a5cc4'};
  white-space:nowrap;
`

const TaskText = styled.span`
  flex:1;
  text-align:left;
  overflow:hidden;

  b{
    font-weight:400;
    color:#ffd0a0;
    margin-right:3px;
  }
`

const Tray = styled.div`
  display:flex;
  align-items:center;
  gap:2px;
  width:272px;
  padding-left:8px;
  border-left:1px solid #10428a;
  background:linear-gradient(#0c6cc8 0, #1cb0f8 2px, #159cf0 5px, #0f8eea 12px, #1290ee 24px, #0c68b8 30px);
  box-shadow:inset 1px 0 0 #30c0ff;

  button{
    background:none;
  }
  time{
    margin-left:8px;
  }
`

const tasks = [
  { icon: <Itunes />, text: 'iTunes' },
  { icon: <Azureus />, text: 'Azureus' },
  { icon: <Bone />, text: 'GrabIt' },
  { icon: <Runner />, count: 4, text: 'AOL Insta...' },
  { icon: <Folder />, text: 'mp2student' },
  { icon: <Firefox />, count: 5, text: 'Firefox' },
  { icon: <Putty />, text: 'screen: 2 (zsh)' },
  { icon: <Ball />, text: 'MAX+plus II - ...', active: true },
  { icon: <Book />, text: 'MAX+PLUS II ...' },
]

const menus = ['MAX+plus II', 'File', 'Edit', 'View', 'Node', 'Assign', 'Utilities', 'Options', 'Window', 'Help']

const App = () => (
  <Screens>
    <GlobalStyle />
    <Primary>
      <Caption main active icon={<Ball />} title="MAX+plus II - c:\mp2student\adder" />
      <MenuBar>
        {menus.map(m => <button key={m}>{m}</button>)}
      </MenuBar>
      <ToolBar>
        {toolGroups.map(g => (
          <ToolGroup key={g.items[0]} $wide={g.wide}>
            {g.items.map(n => (
              <ToolButton key={n} aria-label={n} disabled={(g.off || []).includes(n)} $pressed={g.pressed === n}>{icons[n]}</ToolButton>
            ))}
          </ToolGroup>
        ))}
      </ToolBar>
      <Workspace>
        <Palette>
          <PaletteSection $first>
            <ToolButton aria-label="Select" $pressed>{icons.pointer}</ToolButton>
            <ToolButton aria-label="Text">{icons.textTool}</ToolButton>
            <ToolButton aria-label="Waveform edit">{icons.nodeTool}</ToolButton>
          </PaletteSection>
          <PaletteSection>
            <ToolButton aria-label="Zoom in">{icons.zoomIn}</ToolButton>
            <ToolButton aria-label="Zoom out">{icons.zoomOut}</ToolButton>
            <ToolButton aria-label="Fit in window">{icons.fit}</ToolButton>
          </PaletteSection>
          <PaletteSection $last>
            {waveTools.map(t => (
              <ToolButton key={t.name} aria-label={t.name} disabled><WaveGlyph {...t} /></ToolButton>
            ))}
          </PaletteSection>
        </Palette>
        <Mdi>
          <Messages />
          <Compiler />
          <Simulator />
          <Waveform />
        </Mdi>
      </Workspace>
      <StatusBar />
      <TaskBar>
        <StartButton><Flag />start</StartButton>
        <QuickLaunch>
          <button aria-label="Firefox"><Firefox /></button>
          <button aria-label="Internet Explorer"><Explorer /></button>
          <button aria-label="Show desktop"><ShowDesktop /></button>
        </QuickLaunch>
        <TaskList>
          {tasks.map(t => (
            <TaskButton key={t.text} $active={t.active}>
              {t.icon}
              <TaskText>{t.count && <b>{t.count}</b>}{t.text}</TaskText>
              {t.count && <Solid dir="down" color="#fff" w={5} h={4} />}
            </TaskButton>
          ))}
        </TaskList>
        <Tray>
          {trayIcons.map(([name, pic]) => <button key={name} aria-label={name}>{pic}</button>)}
          <time>2:50 PM</time>
        </Tray>
      </TaskBar>
    </Primary>
    <Secondary>
      <SecondaryHalf />
      <SecondaryHalf $dark />
    </Secondary>
  </Screens>
)

export default App
